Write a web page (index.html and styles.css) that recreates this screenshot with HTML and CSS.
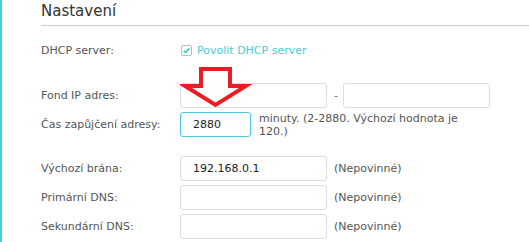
FILE: index.html
```html
<!DOCTYPE html>
<html lang="cs">
<head>
  <meta charset="UTF-8" />
  <title>Nastavení DHCP</title>
  <meta name="viewport" content="width=device-width, initial-scale=1.0"/>
  <link rel="stylesheet" href="styles.css">
</head>
<body>
  <div class="page">
    <h2 class="title">Nastavení</h2>

    <!-- DHCP server -->
    <div class="row row-first">
      <label class="label">DHCP server:</label>
      <label class="check">
        <svg class="check-box" width="11" height="11" viewBox="0 0 11 11">
          <rect x="0.5" y="0.5" width="10" height="10" rx="1.5" fill="#fff" stroke="#b9b9b9"/>
          <path d="M2.6 5.6 L4.6 7.6 L8.4 3.4" fill="none" stroke="#4acbd6" stroke-width="1.6"/>
        </svg>
        Povolit DHCP server
      </label>
    </div>

    <!-- Fond IP adres -->
    <div class="row row-gap">
      <label class="label">Fond IP adres:</label>
      <input class="field" type="text" value="">
      <span class="dash">-</span>
      <input class="field" type="text" value="">
    </div>

    <!-- Cas zapujceni -->
    <div class="row row-lease">
      <label class="label">Čas zapůjčení adresy:</label>
      <input class="field field-short field-active" type="text" value="2880">
      <span class="hint">minuty. (2-2880. Výchozí hodnota je 120.)</span>
    </div>

    <!-- Brana a DNS -->
    <div class="row row-gap-big">
      <label class="label">Výchozí brána:</label>
      <input class="field" type="text" value="192.168.0.1">
      <span class="note">(Nepovinné)</span>
    </div>
    <div class="row">
      <label class="label">Primární DNS:</label>
      <input class="field" type="text" value="">
      <span class="note">(Nepovinné)</span>
    </div>
    <div class="row">
      <label class="label">Sekundární DNS:</label>
      <input class="field" type="text" value="">
      <span class="note">(Nepovinné)</span>
    </div>

    <!-- red arrow drawn over the form -->
    <svg class="arrow" width="72" height="46" viewBox="0 0 72 46">
      <path d="M21 5 H50 V22 H66 L35.5 41 L5 22 H21 Z" fill="#fff" stroke="#ec1c24" stroke-width="4" stroke-linejoin="miter"/>
    </svg>
  </div>
</body>
</html>
```

FILE: styles.css
```css
body {
  margin: 0;
  background-color: #fff;
  font-family: 'DejaVu Sans', Verdana, sans-serif;
  font-size: 11px;
  color: #555;
}
.page {
  position: relative;
  height: 242px;
  border-left: 2px solid #4acbd6;
  padding-left: 39px;
  box-sizing: border-box;
  overflow: hidden;
}
.title {
  margin: 0;
  height: 25px;
  line-height: 23px;
  font-size: 15px;
  font-weight: normal;
  color: #333;
  border-bottom: 1px solid #cfcfcf;
}
.row {
  display: flex;
  align-items: center;
  height: 25px;
  margin-top: 4px;
}
.row-first {
  margin-top: 12px;
  height: 24px;
}
.row-gap {
  margin-top: 21px;
}
.row-lease {
  align-items: flex-start;
}
.row-gap-big {
  margin-top: 19px;
}
.label {
  width: 139px;
  flex-shrink: 0;
}
.row-lease .label {
  align-self: center;
}
.check {
  display: flex;
  align-items: center;
  gap: 5px;
  color: #4acbd6;
  margin-left: 1px;
}
.check-box {
  display: block;
}
.field {
  box-sizing: border-box;
  width: 147px;
  height: 25px;
  margin: 0;
  padding: 0 12px;
  border: 1px solid #dedede;
  border-radius: 3px;
  font-family: inherit;
  font-size: 11px;
  color: #222;
  background: #fff;
  outline: none;
}
.field-short {
  width: 71px;
}
.field-active {
  border-color: #4acbd6;
}
.dash {
  margin: 0 5px 0 7px;
  color: #777;
}
.hint {
  width: 215px;
  margin-left: 8px;
  margin-top: 0;
  line-height: 13px;
}
.note {
  margin-left: 7px;
}
.arrow {
  position: absolute;
  left: 178px;
  top: 64px;
}
```
